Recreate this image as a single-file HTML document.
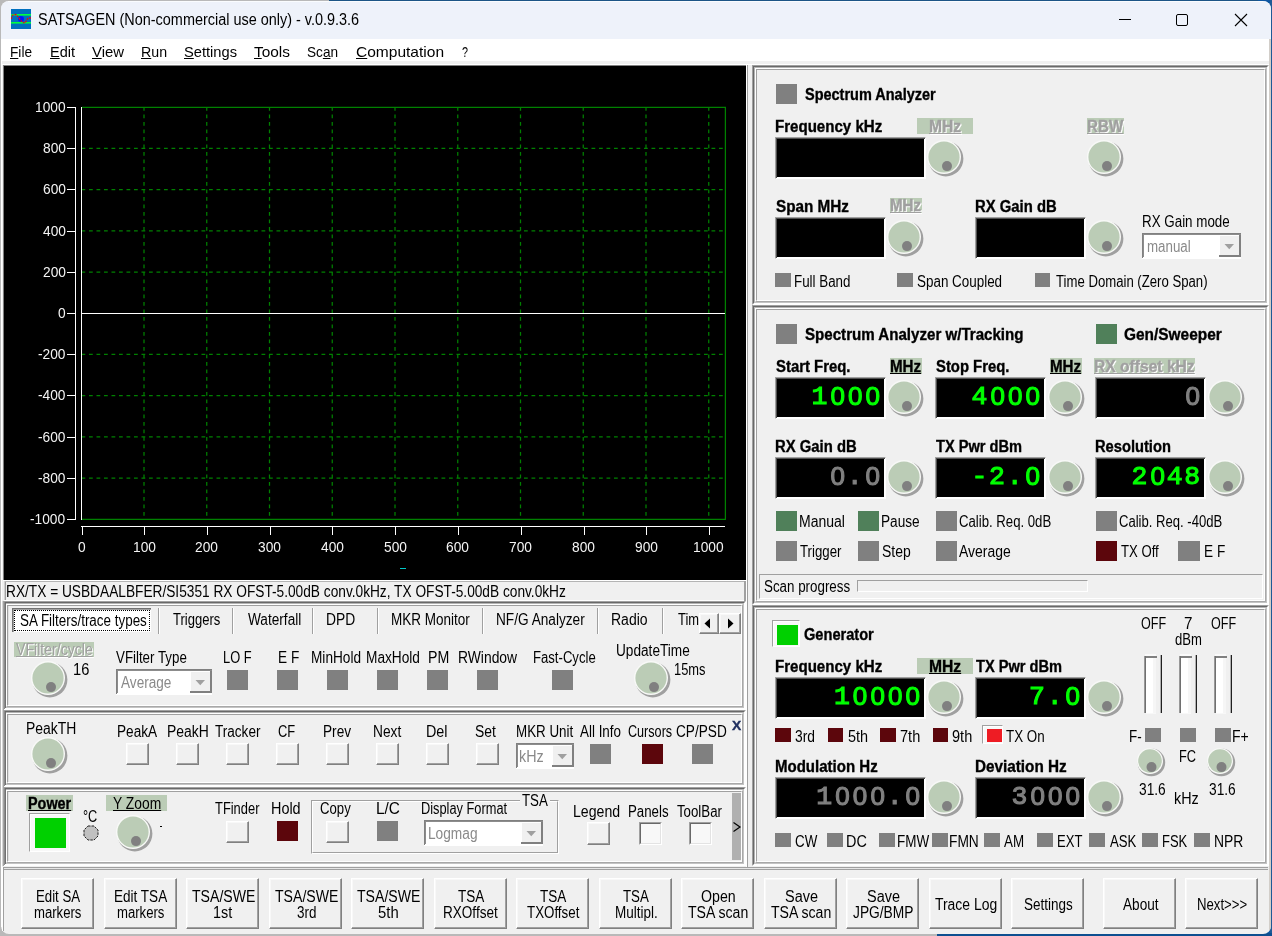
<!DOCTYPE html>
<html><head><meta charset="utf-8"><title>SATSAGEN</title><style>
html,body{margin:0;padding:0}
body{width:1272px;height:936px;overflow:hidden;position:relative;background:#b9b9b9;font-family:"Liberation Sans",sans-serif;}
div,span.t,svg{position:absolute}
#L{left:0;top:0;width:1272px;height:936px;will-change:transform}
span.t{white-space:nowrap;transform-origin:0 0;line-height:normal;display:block}
.kn i{position:absolute;left:3px;top:3px;right:-2px;bottom:-2px;border-radius:50%;background:#a0a0a0}
.kn b{position:absolute;left:0;top:0;right:0;bottom:0;border-radius:50%;background:#bbccb6;border:1px solid #f4f6f2;box-sizing:border-box}
.kn u{position:absolute;border-radius:50%;background:#808080}
.dsp{background:#000;box-sizing:border-box;border:1px solid;border-color:#a0a0a0 #fff #fff #a0a0a0;box-shadow:inset 1px 1px 0 #505050, inset -1px -1px 0 #fff;font-family:"Liberation Mono",monospace;font-weight:normal;-webkit-text-stroke:1.1px currentColor;font-size:26.5px;overflow:hidden}
.dsp span{position:absolute;right:4px;top:3px;white-space:nowrap;height:32px}
.dsp i{display:inline-block;width:17.6px;height:32px;line-height:32px;text-align:center;font-style:normal;vertical-align:top}
.dsp i.z{font-family:"Liberation Sans",sans-serif;font-size:26px;position:relative;top:-1px;left:0.6px;transform:scaleX(1.0)}
.btn{box-sizing:border-box;background:#f0f0f0;border:1px solid;border-color:#fff #808080 #808080 #fff;box-shadow:inset -1px -1px 0 #a0a0a0, inset 1px 1px 0 #f8f8f8}
.cb{box-sizing:border-box;background:#fff;border:1px solid;border-color:#a0a0a0 #fff #fff #a0a0a0;box-shadow:inset 1px 1px 0 #696969, inset -1px -1px 0 #e3e3e3}
.cbb{position:absolute;right:2px;top:2px;bottom:2px;box-sizing:border-box;background:#f0f0f0;border:1px solid;border-color:#fff #808080 #808080 #fff;box-shadow:inset -1px -1px 0 #a0a0a0}
.cbb i{position:absolute;left:50%;top:50%;margin:-2px 0 0 -4px;border:4px solid transparent;border-top:4px solid #808080;border-bottom:0}
</style></head>
<body><div id="L">
<div style="left:0px;top:0px;width:1272px;height:936px;background:#b9b9b9;"></div>
<div style="left:329px;top:0px;width:943px;height:1px;background:#1c5586;"></div>
<div style="left:1258px;top:0px;width:14px;height:12px;background:#0f58a3;"></div>
<div style="left:1258px;top:922px;width:14px;height:14px;background:#0f58a3;"></div>
<div style="left:1270px;top:0px;width:2px;height:936px;background:#1f5a96;"></div>
<div style="left:937px;top:933px;width:335px;height:3px;background:#0d4f90;"></div>
<div style="left:1px;top:1px;width:1270px;height:933px;background:#f0f0f0;border-radius:8px 8px 8px 8px;overflow:hidden;"><div style="left:0;top:0;width:1270px;height:38px;background:#eef2fa"></div><div style="left:0;top:38px;width:1270px;height:22px;background:#ffffff"></div><div style="left:1268px;top:38px;width:2px;height:895px;background:#d2cec9"></div></div>
<svg style="left:11px;top:9px" width="20" height="20" viewBox="0 0 20 20"><rect width="20" height="20" fill="#0070c0"/><rect y="5" width="20" height="1.6" fill="#00ff40"/><rect y="13" width="20" height="1.6" fill="#00ff40"/><circle cx="10" cy="10" r="3" fill="#0018ff"/><path d="M0 10 L2 6 L5 5.5 L8 9 L11 13 L14 14 L17 9 L20 9" fill="none" stroke="#e01010" stroke-width="1.3" stroke-dasharray="2 1"/></svg>
<span class="t " style="left:37.78px;top:10.8px;font-size:16px;transform:scaleX(0.902);color:#000;">SATSAGEN (Non-commercial use only) - v.0.9.3.6</span>
<svg style="left:1110px;top:1px" width="160" height="38" viewBox="0 0 160 38"><path d="M9 18.500 H21" stroke="#000" stroke-width="1" fill="none"/><rect x="66.500" y="13.500" width="11" height="11" rx="1.5" fill="none" stroke="#000" stroke-width="1"/><path d="M125 13 L137 25 M137 13 L125 25" stroke="#000" stroke-width="1.1" fill="none"/></svg>
<span class="t" style="left:10px;top:43px;font-size:15px;transform:scaleX(0.910)"><u>F</u>ile</span>
<span class="t" style="left:50px;top:43px;font-size:15px;transform:scaleX(0.967)"><u>E</u>dit</span>
<span class="t" style="left:92px;top:43px;font-size:15px;transform:scaleX(0.993)"><u>V</u>iew</span>
<span class="t" style="left:141px;top:43px;font-size:15px;transform:scaleX(0.945)"><u>R</u>un</span>
<span class="t" style="left:184px;top:43px;font-size:15px;transform:scaleX(0.978)"><u>S</u>ettings</span>
<span class="t" style="left:254px;top:43px;font-size:15px;transform:scaleX(1.028)"><u>T</u>ools</span>
<span class="t" style="left:307px;top:43px;font-size:15px;transform:scaleX(0.907)">Sc<u>a</u>n</span>
<span class="t" style="left:356px;top:43px;font-size:15px;transform:scaleX(1.035)"><u>C</u>omputation</span>
<span class="t" style="left:462px;top:43px;font-size:15px;transform:scaleX(0.719)">?</span>
<div style="left:1px;top:64px;width:1268px;height:1px;background:#ffffff;"></div>
<div style="left:1px;top:39px;width:1px;height:888px;background:#ffffff;"></div>
<div style="left:8px;top:1px;width:1255px;height:1px;background:#fafcfe;"></div>
<div style="left:3px;top:65px;width:743px;height:1px;background:#808080;"></div>
<div style="left:3px;top:65px;width:1px;height:515px;background:#808080;"></div>
<div style="left:4px;top:66px;width:742px;height:514px;background:#000000;"></div>
<div style="left:3px;top:580px;width:743px;height:1px;background:#ffffff;"></div>
<div style="left:746px;top:65px;width:1px;height:802px;background:#ffffff;"></div>
<div style="left:747px;top:65px;width:1px;height:802px;background:#a0a0a0;"></div>
<svg style="left:4px;top:66px" width="742" height="514" viewBox="0 0 742 514" shape-rendering="crispEdges"><path d="M140.0 41 V453" stroke="#008000" stroke-width="1.25" stroke-dasharray="3.75 3.75" shape-rendering="auto"/><path d="M202.75 41 V453" stroke="#008000" stroke-width="1.25" stroke-dasharray="3.75 3.75" shape-rendering="auto"/><path d="M265.5 41 V453" stroke="#008000" stroke-width="1.25" stroke-dasharray="3.75 3.75" shape-rendering="auto"/><path d="M328.25 41 V453" stroke="#008000" stroke-width="1.25" stroke-dasharray="3.75 3.75" shape-rendering="auto"/><path d="M391.0 41 V453" stroke="#008000" stroke-width="1.25" stroke-dasharray="3.75 3.75" shape-rendering="auto"/><path d="M453.75 41 V453" stroke="#008000" stroke-width="1.25" stroke-dasharray="3.75 3.75" shape-rendering="auto"/><path d="M516.5 41 V453" stroke="#008000" stroke-width="1.25" stroke-dasharray="3.75 3.75" shape-rendering="auto"/><path d="M579.25 41 V453" stroke="#008000" stroke-width="1.25" stroke-dasharray="3.75 3.75" shape-rendering="auto"/><path d="M642.0 41 V453" stroke="#008000" stroke-width="1.25" stroke-dasharray="3.75 3.75" shape-rendering="auto"/><path d="M704.75 41 V453" stroke="#008000" stroke-width="1.25" stroke-dasharray="3.75 3.75" shape-rendering="auto"/><path d="M77.5 82.4 H721" stroke="#008000" stroke-width="1.25" stroke-dasharray="3.75 3.75" shape-rendering="auto"/><path d="M77.5 123.6 H721" stroke="#008000" stroke-width="1.25" stroke-dasharray="3.75 3.75" shape-rendering="auto"/><path d="M77.5 164.8 H721" stroke="#008000" stroke-width="1.25" stroke-dasharray="3.75 3.75" shape-rendering="auto"/><path d="M77.5 206.0 H721" stroke="#008000" stroke-width="1.25" stroke-dasharray="3.75 3.75" shape-rendering="auto"/><path d="M77.5 288.4 H721" stroke="#008000" stroke-width="1.25" stroke-dasharray="3.75 3.75" shape-rendering="auto"/><path d="M77.5 329.6 H721" stroke="#008000" stroke-width="1.25" stroke-dasharray="3.75 3.75" shape-rendering="auto"/><path d="M77.5 370.8 H721" stroke="#008000" stroke-width="1.25" stroke-dasharray="3.75 3.75" shape-rendering="auto"/><path d="M77.5 412.0 H721" stroke="#008000" stroke-width="1.25" stroke-dasharray="3.75 3.75" shape-rendering="auto"/><path d="M78 41.400000000000006 H721.4 V453.4 H78" stroke="#008000" stroke-width="1.25" fill="none" shape-rendering="auto"/><path d="M77.5 41 V454" stroke="#fff" stroke-width="1"/><path d="M77 247.5 H721" stroke="#fff" stroke-width="1"/><path d="M71.5 41 V454" stroke="#fff" stroke-width="1"/><path d="M63 41.5 H72" stroke="#fff" stroke-width="1"/><path d="M63 82.5 H72" stroke="#fff" stroke-width="1"/><path d="M63 123.5 H72" stroke="#fff" stroke-width="1"/><path d="M63 165.5 H72" stroke="#fff" stroke-width="1"/><path d="M63 206.5 H72" stroke="#fff" stroke-width="1"/><path d="M63 247.5 H72" stroke="#fff" stroke-width="1"/><path d="M63 288.5 H72" stroke="#fff" stroke-width="1"/><path d="M63 329.5 H72" stroke="#fff" stroke-width="1"/><path d="M63 371.5 H72" stroke="#fff" stroke-width="1"/><path d="M63 412.5 H72" stroke="#fff" stroke-width="1"/><path d="M63 453.5 H72" stroke="#fff" stroke-width="1"/><path d="M77 460.5 H721" stroke="#fff" stroke-width="1"/><path d="M78.5 461 V469" stroke="#fff" stroke-width="1"/><path d="M140.5 461 V469" stroke="#fff" stroke-width="1"/><path d="M203.5 461 V469" stroke="#fff" stroke-width="1"/><path d="M266.5 461 V469" stroke="#fff" stroke-width="1"/><path d="M328.5 461 V469" stroke="#fff" stroke-width="1"/><path d="M391.5 461 V469" stroke="#fff" stroke-width="1"/><path d="M454.5 461 V469" stroke="#fff" stroke-width="1"/><path d="M517.5 461 V469" stroke="#fff" stroke-width="1"/><path d="M580.5 461 V469" stroke="#fff" stroke-width="1"/><path d="M642.5 461 V469" stroke="#fff" stroke-width="1"/><path d="M705.5 461 V469" stroke="#fff" stroke-width="1"/><path d="M396 502.5 H402" stroke="#00c8c8" stroke-width="1"/></svg>
<span class="t " style="left:34.9px;top:98.1px;font-size:15px;transform:scaleX(0.916);color:#f4f4f4;">1000</span>
<span class="t " style="left:42.6px;top:139.1px;font-size:15px;transform:scaleX(0.916);color:#f4f4f4;">800</span>
<span class="t " style="left:42.59px;top:180.1px;font-size:15px;transform:scaleX(0.916);color:#f4f4f4;">600</span>
<span class="t " style="left:42.6px;top:222.1px;font-size:15px;transform:scaleX(0.916);color:#f4f4f4;">400</span>
<span class="t " style="left:42.59px;top:263.1px;font-size:15px;transform:scaleX(0.916);color:#f4f4f4;">200</span>
<span class="t " style="left:57.85px;top:304.1px;font-size:15px;transform:scaleX(0.916);color:#f4f4f4;">0</span>
<span class="t " style="left:37.92px;top:345.1px;font-size:15px;transform:scaleX(0.916);color:#f4f4f4;">-200</span>
<span class="t " style="left:37.92px;top:386.1px;font-size:15px;transform:scaleX(0.916);color:#f4f4f4;">-400</span>
<span class="t " style="left:37.92px;top:428.1px;font-size:15px;transform:scaleX(0.916);color:#f4f4f4;">-600</span>
<span class="t " style="left:37.92px;top:469.1px;font-size:15px;transform:scaleX(0.916);color:#f4f4f4;">-800</span>
<span class="t " style="left:30.36px;top:510.1px;font-size:15px;transform:scaleX(0.916);color:#f4f4f4;">-1000</span>
<span class="t " style="left:77.65px;top:538.1px;font-size:15px;transform:scaleX(0.916);color:#f4f4f4;">0</span>
<span class="t " style="left:132.5px;top:538.1px;font-size:15px;transform:scaleX(0.916);color:#f4f4f4;">100</span>
<span class="t " style="left:195.45px;top:538.1px;font-size:15px;transform:scaleX(0.916);color:#f4f4f4;">200</span>
<span class="t " style="left:258.27px;top:538.1px;font-size:15px;transform:scaleX(0.916);color:#f4f4f4;">300</span>
<span class="t " style="left:321.17px;top:538.1px;font-size:15px;transform:scaleX(0.916);color:#f4f4f4;">400</span>
<span class="t " style="left:383.77px;top:538.1px;font-size:15px;transform:scaleX(0.916);color:#f4f4f4;">500</span>
<span class="t " style="left:446.45px;top:538.1px;font-size:15px;transform:scaleX(0.916);color:#f4f4f4;">600</span>
<span class="t " style="left:509.2px;top:538.1px;font-size:15px;transform:scaleX(0.916);color:#f4f4f4;">700</span>
<span class="t " style="left:572.02px;top:538.1px;font-size:15px;transform:scaleX(0.916);color:#f4f4f4;">800</span>
<span class="t " style="left:634.7px;top:538.1px;font-size:15px;transform:scaleX(0.916);color:#f4f4f4;">900</span>
<span class="t " style="left:693.4px;top:538.1px;font-size:15px;transform:scaleX(0.916);color:#f4f4f4;">1000</span>
<div style="left:4px;top:581px;width:740px;height:1px;background:#b4b4b4;"></div>
<div style="left:4px;top:581px;width:1px;height:20px;background:#d0d0d0;"></div>
<div style="left:5px;top:582px;width:1px;height:18px;background:#a0a0a0;"></div>
<div style="left:744px;top:581px;width:2px;height:22px;background:#a0a0a0;"></div>
<span class="t " style="left:5.7px;top:582.5px;font-size:16px;transform:scaleX(0.856);color:#000;">RX/TX = USBDAALBFER/SI5351 RX OFST-5.00dB conv.0kHz, TX OFST-5.00dB conv.0kHz</span>
<div style="left:4px;top:600px;width:740px;height:1px;background:#ffffff;"></div>
<div style="left:752px;top:65px;width:517px;height:240px;box-sizing:border-box;border:1px solid;border-color:#a0a0a0 #ffffff #ffffff #a0a0a0;"></div>
<div style="left:753px;top:66px;width:515px;height:238px;box-sizing:border-box;border:1px solid;border-color:#696969 #ffffff #ffffff #696969;"></div>
<div style="left:754px;top:67px;width:513px;height:236px;box-sizing:border-box;border:1px solid;border-color:#b4b4b4 #c4c4c4 #c4c4c4 #b4b4b4;"></div>
<div style="left:755px;top:68px;width:511px;height:234px;box-sizing:border-box;border:1px solid;border-color:#ffffff #a8a8a8 #a8a8a8 #ffffff;"></div>
<div style="left:756px;top:69px;width:509px;height:232px;box-sizing:border-box;border:1px solid;border-color:#a0a0a0 #ffffff #ffffff #a0a0a0;"></div>
<div style="left:776px;top:84px;width:21px;height:20px;background:#808080;"></div>
<span class="t " style="left:804.57px;top:85.5px;font-size:16px;transform:scaleX(0.905);color:#000;font-weight:bold;-webkit-text-stroke:0.35px #000;">Spectrum Analyzer</span>
<span class="t " style="left:774.94px;top:117.5px;font-size:16px;transform:scaleX(0.942);color:#000;font-weight:bold;-webkit-text-stroke:0.35px #000;">Frequency kHz</span>
<div style="left:917px;top:118px;width:56px;height:16px;background:#bbccb6;"></div>
<span class="t " style="left:929.66px;top:118.5px;font-size:16px;transform:scaleX(0.978);color:#ffffff;font-weight:bold;-webkit-text-stroke:0.35px #ffffff;text-decoration:underline;">MHz</span>
<span class="t " style="left:928.66px;top:117.5px;font-size:16px;transform:scaleX(0.978);color:#a0a0a0;font-weight:bold;-webkit-text-stroke:0.35px #a0a0a0;text-decoration:underline;">MHz</span>
<div class="dsp" style="left:775px;top:137px;width:151px;height:42px;color:#00ff00"><span></span></div>
<svg style="left:922.1999999999999px;top:135.1px" width="44" height="44" viewBox="0 0 44 44"><circle cx="23.8" cy="23.8" r="17.6" fill="#a0a0a0"/><circle cx="22.0" cy="22.0" r="17.0" fill="#f8f9f7"/><circle cx="22.0" cy="22.0" r="15.6" fill="#bbccb6"/><circle cx="25.0" cy="31.1" r="5.0" fill="#808080"/></svg>
<div style="left:1087px;top:118px;width:37px;height:16px;background:#bbccb6;"></div>
<span class="t " style="left:1087.94px;top:118.5px;font-size:16px;transform:scaleX(0.947);color:#ffffff;font-weight:bold;-webkit-text-stroke:0.35px #ffffff;text-decoration:underline;">RBW</span>
<span class="t " style="left:1086.94px;top:117.5px;font-size:16px;transform:scaleX(0.947);color:#a0a0a0;font-weight:bold;-webkit-text-stroke:0.35px #a0a0a0;text-decoration:underline;">RBW</span>
<svg style="left:1082.2px;top:135.1px" width="44" height="44" viewBox="0 0 44 44"><circle cx="23.8" cy="23.8" r="17.6" fill="#a0a0a0"/><circle cx="22.0" cy="22.0" r="17.0" fill="#f8f9f7"/><circle cx="22.0" cy="22.0" r="15.6" fill="#bbccb6"/><circle cx="25.0" cy="31.1" r="5.0" fill="#808080"/></svg>
<span class="t " style="left:775.54px;top:197.5px;font-size:16px;transform:scaleX(0.955);color:#000;font-weight:bold;-webkit-text-stroke:0.35px #000;">Span MHz</span>
<div style="left:890px;top:198px;width:32px;height:15px;background:#bbccb6;"></div>
<span class="t " style="left:891.19px;top:197.5px;font-size:16px;transform:scaleX(0.946);color:#ffffff;font-weight:bold;-webkit-text-stroke:0.35px #ffffff;text-decoration:underline;">MHz</span>
<span class="t " style="left:890.19px;top:196.5px;font-size:16px;transform:scaleX(0.946);color:#a0a0a0;font-weight:bold;-webkit-text-stroke:0.35px #a0a0a0;text-decoration:underline;">MHz</span>
<div class="dsp" style="left:775px;top:217px;width:111px;height:42px;color:#00ff00"><span></span></div>
<svg style="left:882.3px;top:215.1px" width="44" height="44" viewBox="0 0 44 44"><circle cx="23.8" cy="23.8" r="17.6" fill="#a0a0a0"/><circle cx="22.0" cy="22.0" r="17.0" fill="#f8f9f7"/><circle cx="22.0" cy="22.0" r="15.6" fill="#bbccb6"/><circle cx="25.0" cy="31.1" r="5.0" fill="#808080"/></svg>
<span class="t " style="left:974.96px;top:197.5px;font-size:16px;transform:scaleX(0.928);color:#000;font-weight:bold;-webkit-text-stroke:0.35px #000;">RX Gain dB</span>
<div class="dsp" style="left:975px;top:217px;width:111px;height:42px;color:#00ff00"><span></span></div>
<svg style="left:1082.2px;top:215.1px" width="44" height="44" viewBox="0 0 44 44"><circle cx="23.8" cy="23.8" r="17.6" fill="#a0a0a0"/><circle cx="22.0" cy="22.0" r="17.0" fill="#f8f9f7"/><circle cx="22.0" cy="22.0" r="15.6" fill="#bbccb6"/><circle cx="25.0" cy="31.1" r="5.0" fill="#808080"/></svg>
<span class="t " style="left:1141.93px;top:212.5px;font-size:16px;transform:scaleX(0.836);color:#000;">RX Gain mode</span>
<div style="left:1142px;top:233px;width:99px;height:26px;background:#ffffff;"></div>
<div style="left:1142px;top:233px;width:99px;height:1px;background:#808080;"></div>
<div style="left:1143px;top:234px;width:98px;height:1px;background:#8c8c8c;"></div>
<div style="left:1142px;top:233px;width:1px;height:25px;background:#808080;"></div>
<div style="left:1143px;top:234px;width:1px;height:23px;background:#8c8c8c;"></div>
<div style="left:1219px;top:235px;width:22px;height:22px;background:#f0f0f0;"></div>
<div style="left:1219px;top:235px;width:21px;height:1px;background:#ffffff;"></div>
<div style="left:1219px;top:235px;width:1px;height:21px;background:#ffffff;"></div>
<div style="left:1239px;top:235px;width:2px;height:22px;background:#808080;"></div>
<div style="left:1219px;top:255px;width:22px;height:2px;background:#808080;"></div>
<svg style="left:1224px;top:244px" width="11" height="6" viewBox="0 0 11 6"><path d="M0.500 0 H10 L5.250 5.200 Z" fill="#a0a0a0"/></svg>
<span class="t " style="left:1146.87px;top:237.5px;font-size:16px;transform:scaleX(0.833);color:#8a8a8a;">manual</span>
<div style="left:774.9px;top:272.6px;width:15.8px;height:14.4px;background:#808080;"></div>
<span class="t " style="left:793.93px;top:272.5px;font-size:16px;transform:scaleX(0.835);color:#000;">Full Band</span>
<div style="left:897.2px;top:272.6px;width:15.8px;height:14.4px;background:#808080;"></div>
<span class="t " style="left:916.83px;top:272.5px;font-size:16px;transform:scaleX(0.839);color:#000;">Span Coupled</span>
<div style="left:1034.5px;top:272.6px;width:15.8px;height:14.4px;background:#808080;"></div>
<span class="t " style="left:1055.74px;top:272.5px;font-size:16px;transform:scaleX(0.822);color:#000;">Time Domain (Zero Span)</span>
<div style="left:752px;top:305px;width:517px;height:300px;box-sizing:border-box;border:1px solid;border-color:#a0a0a0 #ffffff #ffffff #a0a0a0;"></div>
<div style="left:753px;top:306px;width:515px;height:298px;box-sizing:border-box;border:1px solid;border-color:#696969 #ffffff #ffffff #696969;"></div>
<div style="left:754px;top:307px;width:513px;height:296px;box-sizing:border-box;border:1px solid;border-color:#b4b4b4 #c4c4c4 #c4c4c4 #b4b4b4;"></div>
<div style="left:755px;top:308px;width:511px;height:294px;box-sizing:border-box;border:1px solid;border-color:#ffffff #a8a8a8 #a8a8a8 #ffffff;"></div>
<div style="left:756px;top:309px;width:509px;height:292px;box-sizing:border-box;border:1px solid;border-color:#a0a0a0 #ffffff #ffffff #a0a0a0;"></div>
<div style="left:776px;top:324px;width:21px;height:20px;background:#808080;"></div>
<span class="t " style="left:804.55px;top:325.5px;font-size:16px;transform:scaleX(0.944);color:#000;font-weight:bold;-webkit-text-stroke:0.35px #000;">Spectrum Analyzer w/Tracking</span>
<div style="left:1096px;top:324px;width:21px;height:20px;background:#50805a;"></div>
<span class="t " style="left:1124.38px;top:325.5px;font-size:16px;transform:scaleX(0.964);color:#000;font-weight:bold;-webkit-text-stroke:0.35px #000;">Gen/Sweeper</span>
<span class="t " style="left:775.55px;top:357.5px;font-size:16px;transform:scaleX(0.931);color:#000;font-weight:bold;-webkit-text-stroke:0.35px #000;">Start Freq.</span>
<div style="left:890px;top:358px;width:32px;height:16px;background:#bbccb6;"></div>
<span class="t " style="left:890.19px;top:357.5px;font-size:16px;transform:scaleX(0.946);color:#000;font-weight:bold;-webkit-text-stroke:0.35px #000;text-decoration:underline;">MHz</span>
<div class="dsp" style="left:775px;top:377px;width:111px;height:42px;color:#00ff00"><span><i>1</i><i class="z">0</i><i class="z">0</i><i class="z">0</i></span></div>
<svg style="left:882.3px;top:375.09999999999997px" width="44" height="44" viewBox="0 0 44 44"><circle cx="23.8" cy="23.8" r="17.6" fill="#a0a0a0"/><circle cx="22.0" cy="22.0" r="17.0" fill="#f8f9f7"/><circle cx="22.0" cy="22.0" r="15.6" fill="#bbccb6"/><circle cx="25.0" cy="31.1" r="5.0" fill="#808080"/></svg>
<span class="t " style="left:935.55px;top:357.5px;font-size:16px;transform:scaleX(0.928);color:#000;font-weight:bold;-webkit-text-stroke:0.35px #000;">Stop Freq.</span>
<div style="left:1050px;top:358px;width:32px;height:16px;background:#bbccb6;"></div>
<span class="t " style="left:1050.19px;top:357.5px;font-size:16px;transform:scaleX(0.946);color:#000;font-weight:bold;-webkit-text-stroke:0.35px #000;text-decoration:underline;">MHz</span>
<div class="dsp" style="left:935px;top:377px;width:111px;height:42px;color:#00ff00"><span><i>4</i><i class="z">0</i><i class="z">0</i><i class="z">0</i></span></div>
<svg style="left:1042.5px;top:375.09999999999997px" width="44" height="44" viewBox="0 0 44 44"><circle cx="23.8" cy="23.8" r="17.6" fill="#a0a0a0"/><circle cx="22.0" cy="22.0" r="17.0" fill="#f8f9f7"/><circle cx="22.0" cy="22.0" r="15.6" fill="#bbccb6"/><circle cx="25.0" cy="31.1" r="5.0" fill="#808080"/></svg>
<div style="left:1094px;top:358px;width:101px;height:16px;background:#bbccb6;"></div>
<span class="t " style="left:1094.91px;top:358.5px;font-size:16px;transform:scaleX(0.976);color:#ffffff;font-weight:bold;-webkit-text-stroke:0.35px #ffffff;text-decoration:underline;">RX offset kHz</span>
<span class="t " style="left:1093.91px;top:357.5px;font-size:16px;transform:scaleX(0.976);color:#a0a0a0;font-weight:bold;-webkit-text-stroke:0.35px #a0a0a0;text-decoration:underline;">RX offset kHz</span>
<div class="dsp" style="left:1095px;top:377px;width:111px;height:42px;color:#808080"><span><i class="z">0</i></span></div>
<svg style="left:1202.5px;top:375.09999999999997px" width="44" height="44" viewBox="0 0 44 44"><circle cx="23.8" cy="23.8" r="17.6" fill="#a0a0a0"/><circle cx="22.0" cy="22.0" r="17.0" fill="#f8f9f7"/><circle cx="22.0" cy="22.0" r="15.6" fill="#bbccb6"/><circle cx="25.0" cy="31.1" r="5.0" fill="#808080"/></svg>
<span class="t " style="left:774.96px;top:437.5px;font-size:16px;transform:scaleX(0.928);color:#000;font-weight:bold;-webkit-text-stroke:0.35px #000;">RX Gain dB</span>
<div class="dsp" style="left:775px;top:457px;width:111px;height:42px;color:#808080"><span><i class="z">0</i><i>.</i><i class="z">0</i></span></div>
<svg style="left:882.3px;top:455.09999999999997px" width="44" height="44" viewBox="0 0 44 44"><circle cx="23.8" cy="23.8" r="17.6" fill="#a0a0a0"/><circle cx="22.0" cy="22.0" r="17.0" fill="#f8f9f7"/><circle cx="22.0" cy="22.0" r="15.6" fill="#bbccb6"/><circle cx="25.0" cy="31.1" r="5.0" fill="#808080"/></svg>
<span class="t " style="left:935.85px;top:437.5px;font-size:16px;transform:scaleX(0.913);color:#000;font-weight:bold;-webkit-text-stroke:0.35px #000;">TX Pwr dBm</span>
<div class="dsp" style="left:935px;top:457px;width:111px;height:42px;color:#00ff00"><span><i>-</i><i>2</i><i>.</i><i class="z">0</i></span></div>
<svg style="left:1042.5px;top:455.09999999999997px" width="44" height="44" viewBox="0 0 44 44"><circle cx="23.8" cy="23.8" r="17.6" fill="#a0a0a0"/><circle cx="22.0" cy="22.0" r="17.0" fill="#f8f9f7"/><circle cx="22.0" cy="22.0" r="15.6" fill="#bbccb6"/><circle cx="25.0" cy="31.1" r="5.0" fill="#808080"/></svg>
<span class="t " style="left:1094.97px;top:437.5px;font-size:16px;transform:scaleX(0.918);color:#000;font-weight:bold;-webkit-text-stroke:0.35px #000;">Resolution</span>
<div class="dsp" style="left:1095px;top:457px;width:111px;height:42px;color:#00ff00"><span><i>2</i><i class="z">0</i><i>4</i><i>8</i></span></div>
<svg style="left:1202.5px;top:455.09999999999997px" width="44" height="44" viewBox="0 0 44 44"><circle cx="23.8" cy="23.8" r="17.6" fill="#a0a0a0"/><circle cx="22.0" cy="22.0" r="17.0" fill="#f8f9f7"/><circle cx="22.0" cy="22.0" r="15.6" fill="#bbccb6"/><circle cx="25.0" cy="31.1" r="5.0" fill="#808080"/></svg>
<div style="left:776px;top:511px;width:21px;height:20px;background:#50805a;"></div>
<span class="t " style="left:798.88px;top:512.5px;font-size:16px;transform:scaleX(0.876);color:#000;">Manual</span>
<div style="left:858px;top:511px;width:21px;height:20px;background:#50805a;"></div>
<span class="t " style="left:881.41px;top:512.5px;font-size:16px;transform:scaleX(0.853);color:#000;">Pause</span>
<div style="left:936px;top:511px;width:21px;height:20px;background:#808080;"></div>
<span class="t " style="left:959.34px;top:512.5px;font-size:16px;transform:scaleX(0.823);color:#000;">Calib. Req. 0dB</span>
<div style="left:1096px;top:511px;width:21px;height:20px;background:#808080;"></div>
<span class="t " style="left:1119.35px;top:512.5px;font-size:16px;transform:scaleX(0.817);color:#000;">Calib. Req. -40dB</span>
<div style="left:776px;top:541px;width:21px;height:20px;background:#808080;"></div>
<span class="t " style="left:799.74px;top:542.5px;font-size:16px;transform:scaleX(0.827);color:#000;">Trigger</span>
<div style="left:858px;top:541px;width:21px;height:20px;background:#808080;"></div>
<span class="t " style="left:881.8px;top:542.5px;font-size:16px;transform:scaleX(0.872);color:#000;">Step</span>
<div style="left:936px;top:541px;width:21px;height:20px;background:#808080;"></div>
<span class="t " style="left:959.0px;top:542.5px;font-size:16px;transform:scaleX(0.871);color:#000;">Average</span>
<div style="left:1096px;top:541px;width:21px;height:20px;background:#5c060c;"></div>
<span class="t " style="left:1120.74px;top:542.5px;font-size:16px;transform:scaleX(0.822);color:#000;">TX Off</span>
<div style="left:1178px;top:541px;width:22px;height:20px;background:#808080;"></div>
<span class="t " style="left:1203.91px;top:542.5px;font-size:16px;transform:scaleX(0.852);color:#000;">E F</span>
<div style="left:759px;top:574px;width:504px;height:25px;box-sizing:border-box;border:1px solid;border-color:#a0a0a0 #ffffff #ffffff #a0a0a0;"></div>
<span class="t " style="left:764.33px;top:577.5px;font-size:16px;transform:scaleX(0.835);color:#000;">Scan progress</span>
<div style="left:857px;top:580px;width:231px;height:12px;box-sizing:border-box;border:1px solid;border-color:#a0a0a0 #ffffff #ffffff #a0a0a0;"></div>
<div style="left:752px;top:605px;width:517px;height:261px;box-sizing:border-box;border:1px solid;border-color:#a0a0a0 #ffffff #ffffff #a0a0a0;"></div>
<div style="left:753px;top:606px;width:515px;height:259px;box-sizing:border-box;border:1px solid;border-color:#696969 #ffffff #ffffff #696969;"></div>
<div style="left:754px;top:607px;width:513px;height:257px;box-sizing:border-box;border:1px solid;border-color:#b4b4b4 #c4c4c4 #c4c4c4 #b4b4b4;"></div>
<div style="left:755px;top:608px;width:511px;height:255px;box-sizing:border-box;border:1px solid;border-color:#ffffff #a8a8a8 #a8a8a8 #ffffff;"></div>
<div style="left:756px;top:609px;width:509px;height:253px;box-sizing:border-box;border:1px solid;border-color:#a0a0a0 #ffffff #ffffff #a0a0a0;"></div>
<div style="left:772px;top:620px;width:28px;height:27px;box-sizing:border-box;border:1px solid;border-color:#a0a0a0 #ffffff #ffffff #a0a0a0;"></div>
<div style="left:773px;top:621px;width:26px;height:25px;box-sizing:border-box;border:1px solid;border-color:#ffffff #f8f8f8 #f8f8f8 #ffffff;background:#f8f8f8;"></div>
<div style="left:777px;top:625px;width:21px;height:20px;background:#00d000;"></div>
<span class="t " style="left:804.42px;top:625.5px;font-size:16px;transform:scaleX(0.912);color:#000;font-weight:bold;-webkit-text-stroke:0.35px #000;">Generator</span>
<span class="t " style="left:774.94px;top:657.5px;font-size:16px;transform:scaleX(0.942);color:#000;font-weight:bold;-webkit-text-stroke:0.35px #000;">Frequency kHz</span>
<div style="left:917px;top:658px;width:56px;height:16px;background:#bbccb6;"></div>
<span class="t " style="left:928.66px;top:657.5px;font-size:16px;transform:scaleX(0.978);color:#000;font-weight:bold;-webkit-text-stroke:0.35px #000;text-decoration:underline;">MHz</span>
<div class="dsp" style="left:775px;top:677px;width:151px;height:42px;color:#00ff00"><span><i>1</i><i class="z">0</i><i class="z">0</i><i class="z">0</i><i class="z">0</i></span></div>
<svg style="left:922.1999999999999px;top:675.1px" width="44" height="44" viewBox="0 0 44 44"><circle cx="23.8" cy="23.8" r="17.6" fill="#a0a0a0"/><circle cx="22.0" cy="22.0" r="17.0" fill="#f8f9f7"/><circle cx="22.0" cy="22.0" r="15.6" fill="#bbccb6"/><circle cx="25.0" cy="31.1" r="5.0" fill="#808080"/></svg>
<span class="t " style="left:975.85px;top:657.5px;font-size:16px;transform:scaleX(0.913);color:#000;font-weight:bold;-webkit-text-stroke:0.35px #000;">TX Pwr dBm</span>
<div class="dsp" style="left:975px;top:677px;width:111px;height:42px;color:#00ff00"><span><i>7</i><i>.</i><i class="z">0</i></span></div>
<svg style="left:1082.2px;top:675.1px" width="44" height="44" viewBox="0 0 44 44"><circle cx="23.8" cy="23.8" r="17.6" fill="#a0a0a0"/><circle cx="22.0" cy="22.0" r="17.0" fill="#f8f9f7"/><circle cx="22.0" cy="22.0" r="15.6" fill="#bbccb6"/><circle cx="25.0" cy="31.1" r="5.0" fill="#808080"/></svg>
<div style="left:774.9px;top:727.6px;width:15.8px;height:14.4px;background:#5c060c;"></div>
<span class="t " style="left:794.95px;top:727.5px;font-size:16px;transform:scaleX(0.863);color:#000;">3rd</span>
<div style="left:827.6px;top:727.6px;width:15.8px;height:14.4px;background:#5c060c;"></div>
<span class="t " style="left:847.62px;top:727.5px;font-size:16px;transform:scaleX(0.903);color:#000;">5th</span>
<div style="left:880.1px;top:727.6px;width:15.8px;height:14.4px;background:#5c060c;"></div>
<span class="t " style="left:899.97px;top:727.5px;font-size:16px;transform:scaleX(0.910);color:#000;">7th</span>
<div style="left:932.6px;top:727.6px;width:15.8px;height:14.4px;background:#5c060c;"></div>
<span class="t " style="left:952.47px;top:727.5px;font-size:16px;transform:scaleX(0.910);color:#000;">9th</span>
<div style="left:982px;top:725px;width:21px;height:19px;box-sizing:border-box;border:1px solid;border-color:#a0a0a0 #ffffff #ffffff #a0a0a0;"></div>
<div style="left:983px;top:726px;width:19px;height:17px;box-sizing:border-box;border:1px solid;border-color:#ffffff #f8f8f8 #f8f8f8 #ffffff;background:#f8f8f8;"></div>
<div style="left:987px;top:729px;width:15px;height:13px;background:#ee1c24;"></div>
<span class="t " style="left:1005.73px;top:727.5px;font-size:16px;transform:scaleX(0.837);color:#000;">TX On</span>
<span class="t " style="left:774.95px;top:757.5px;font-size:16px;transform:scaleX(0.939);color:#000;font-weight:bold;-webkit-text-stroke:0.35px #000;">Modulation Hz</span>
<div class="dsp" style="left:775px;top:777px;width:151px;height:42px;color:#808080"><span><i>1</i><i class="z">0</i><i class="z">0</i><i class="z">0</i><i>.</i><i class="z">0</i></span></div>
<svg style="left:922.1999999999999px;top:775.1px" width="44" height="44" viewBox="0 0 44 44"><circle cx="23.8" cy="23.8" r="17.6" fill="#a0a0a0"/><circle cx="22.0" cy="22.0" r="17.0" fill="#f8f9f7"/><circle cx="22.0" cy="22.0" r="15.6" fill="#bbccb6"/><circle cx="25.0" cy="31.1" r="5.0" fill="#808080"/></svg>
<span class="t " style="left:974.93px;top:757.5px;font-size:16px;transform:scaleX(0.955);color:#000;font-weight:bold;-webkit-text-stroke:0.35px #000;">Deviation Hz</span>
<div class="dsp" style="left:975px;top:777px;width:111px;height:42px;color:#808080"><span><i>3</i><i class="z">0</i><i class="z">0</i><i class="z">0</i></span></div>
<svg style="left:1082.2px;top:775.1px" width="44" height="44" viewBox="0 0 44 44"><circle cx="23.8" cy="23.8" r="17.6" fill="#a0a0a0"/><circle cx="22.0" cy="22.0" r="17.0" fill="#f8f9f7"/><circle cx="22.0" cy="22.0" r="15.6" fill="#bbccb6"/><circle cx="25.0" cy="31.1" r="5.0" fill="#808080"/></svg>
<div style="left:775.4px;top:832.8px;width:15.8px;height:14.4px;background:#808080;"></div>
<span class="t " style="left:794.83px;top:832.5px;font-size:16px;transform:scaleX(0.835);color:#000;">CW</span>
<div style="left:827.4px;top:832.8px;width:15.8px;height:14.4px;background:#808080;"></div>
<span class="t " style="left:846.35px;top:832.5px;font-size:16px;transform:scaleX(0.900);color:#000;">DC</span>
<div style="left:879.4px;top:832.8px;width:15.8px;height:14.4px;background:#808080;"></div>
<span class="t " style="left:896.92px;top:832.5px;font-size:16px;transform:scaleX(0.842);color:#000;">FMW</span>
<div style="left:932.4px;top:832.8px;width:15.8px;height:14.4px;background:#808080;"></div>
<span class="t " style="left:948.9px;top:832.5px;font-size:16px;transform:scaleX(0.859);color:#000;">FMN</span>
<div style="left:984.4px;top:832.8px;width:15.8px;height:14.4px;background:#808080;"></div>
<span class="t " style="left:1004.0px;top:832.5px;font-size:16px;transform:scaleX(0.836);color:#000;">AM</span>
<div style="left:1037.4px;top:832.8px;width:15.8px;height:14.4px;background:#808080;"></div>
<span class="t " style="left:1056.96px;top:832.5px;font-size:16px;transform:scaleX(0.815);color:#000;">EXT</span>
<div style="left:1089.4px;top:832.8px;width:15.8px;height:14.4px;background:#808080;"></div>
<span class="t " style="left:1109.5px;top:832.5px;font-size:16px;transform:scaleX(0.821);color:#000;">ASK</span>
<div style="left:1142.4px;top:832.8px;width:15.8px;height:14.4px;background:#808080;"></div>
<span class="t " style="left:1161.96px;top:832.5px;font-size:16px;transform:scaleX(0.811);color:#000;">FSK</span>
<div style="left:1194.4px;top:832.8px;width:15.8px;height:14.4px;background:#808080;"></div>
<span class="t " style="left:1213.89px;top:832.5px;font-size:16px;transform:scaleX(0.868);color:#000;">NPR</span>
<span class="t " style="left:1140.87px;top:614.5px;font-size:16px;transform:scaleX(0.785);color:#000;">OFF</span>
<span class="t " style="left:1183.74px;top:614.5px;font-size:16px;transform:scaleX(0.951);color:#000;">7</span>
<span class="t " style="left:1210.87px;top:614.5px;font-size:16px;transform:scaleX(0.785);color:#000;">OFF</span>
<span class="t " style="left:1174.98px;top:630.5px;font-size:16px;transform:scaleX(0.817);color:#000;">dBm</span>
<div style="left:1145px;top:654px;width:11px;height:2px;background:#fafafa;"></div>
<div style="left:1144px;top:656px;width:13px;height:2px;background:#808080;"></div>
<div style="left:1144px;top:656px;width:1px;height:57px;background:#989898;"></div>
<div style="left:1145px;top:656px;width:1px;height:57px;background:#707070;"></div>
<div style="left:1146px;top:658px;width:7px;height:55px;background:#ffffff;"></div>
<div style="left:1153px;top:658px;width:3px;height:55px;background:#f6f6f6;"></div>
<div style="left:1146px;top:713px;width:10px;height:1px;background:#f8f8f8;"></div>
<div style="left:1161px;top:655px;width:1px;height:58px;background:#202020;"></div>
<div style="left:1160px;top:655px;width:1px;height:58px;background:#b0b0b0;"></div>
<div style="left:1180px;top:654px;width:11px;height:2px;background:#fafafa;"></div>
<div style="left:1179px;top:656px;width:13px;height:2px;background:#808080;"></div>
<div style="left:1179px;top:656px;width:1px;height:57px;background:#989898;"></div>
<div style="left:1180px;top:656px;width:1px;height:57px;background:#707070;"></div>
<div style="left:1181px;top:658px;width:7px;height:55px;background:#ffffff;"></div>
<div style="left:1188px;top:658px;width:3px;height:55px;background:#f6f6f6;"></div>
<div style="left:1181px;top:713px;width:10px;height:1px;background:#f8f8f8;"></div>
<div style="left:1196px;top:655px;width:1px;height:58px;background:#202020;"></div>
<div style="left:1195px;top:655px;width:1px;height:58px;background:#b0b0b0;"></div>
<div style="left:1215px;top:654px;width:11px;height:2px;background:#fafafa;"></div>
<div style="left:1214px;top:656px;width:13px;height:2px;background:#808080;"></div>
<div style="left:1214px;top:656px;width:1px;height:57px;background:#989898;"></div>
<div style="left:1215px;top:656px;width:1px;height:57px;background:#707070;"></div>
<div style="left:1216px;top:658px;width:7px;height:55px;background:#ffffff;"></div>
<div style="left:1223px;top:658px;width:3px;height:55px;background:#f6f6f6;"></div>
<div style="left:1216px;top:713px;width:10px;height:1px;background:#f8f8f8;"></div>
<div style="left:1231px;top:655px;width:1px;height:58px;background:#202020;"></div>
<div style="left:1230px;top:655px;width:1px;height:58px;background:#b0b0b0;"></div>
<span class="t " style="left:1128.93px;top:727.5px;font-size:16px;transform:scaleX(0.838);color:#000;">F-</span>
<div style="left:1144.8px;top:727.6px;width:15.8px;height:14.4px;background:#808080;"></div>
<div style="left:1179.8px;top:727.6px;width:15.8px;height:14.4px;background:#808080;"></div>
<div style="left:1214.8px;top:727.6px;width:15.8px;height:14.4px;background:#808080;"></div>
<span class="t " style="left:1231.88px;top:727.5px;font-size:16px;transform:scaleX(0.876);color:#000;">F+</span>
<svg style="left:1128.4px;top:739.2px" width="44" height="44" viewBox="0 0 44 44"><circle cx="23.4" cy="23.4" r="13.8" fill="#a0a0a0"/><circle cx="22.0" cy="22.0" r="13.0" fill="#f8f9f7"/><circle cx="22.0" cy="22.0" r="11.8" fill="#bbccb6"/><circle cx="23.5" cy="28.1" r="5.0" fill="#808080"/></svg>
<svg style="left:1198.4px;top:739.2px" width="44" height="44" viewBox="0 0 44 44"><circle cx="23.4" cy="23.4" r="13.8" fill="#a0a0a0"/><circle cx="22.0" cy="22.0" r="13.0" fill="#f8f9f7"/><circle cx="22.0" cy="22.0" r="11.8" fill="#bbccb6"/><circle cx="23.5" cy="28.1" r="5.0" fill="#808080"/></svg>
<span class="t " style="left:1179.28px;top:747.5px;font-size:16px;transform:scaleX(0.801);color:#000;">FC</span>
<span class="t " style="left:1138.65px;top:780.5px;font-size:16px;transform:scaleX(0.857);color:#000;">31.6</span>
<span class="t " style="left:1208.65px;top:780.5px;font-size:16px;transform:scaleX(0.857);color:#000;">31.6</span>
<span class="t " style="left:1174.49px;top:790.0px;font-size:16px;transform:scaleX(0.898);color:#000;">kHz</span>
<div style="left:3px;top:601px;width:743px;height:109px;box-sizing:border-box;border:1px solid;border-color:#a0a0a0 #ffffff #ffffff #a0a0a0;"></div>
<div style="left:4px;top:602px;width:741px;height:107px;box-sizing:border-box;border:1px solid;border-color:#696969 #ffffff #ffffff #696969;"></div>
<div style="left:5px;top:603px;width:739px;height:105px;box-sizing:border-box;border:1px solid;border-color:#b4b4b4 #c4c4c4 #c4c4c4 #b4b4b4;"></div>
<div style="left:6px;top:604px;width:737px;height:103px;box-sizing:border-box;border:1px solid;border-color:#ffffff #a8a8a8 #a8a8a8 #ffffff;"></div>
<div style="left:7px;top:605px;width:735px;height:101px;box-sizing:border-box;border:1px solid;border-color:#a0a0a0 #ffffff #ffffff #a0a0a0;"></div>
<div style="left:2px;top:601px;width:1px;height:109px;background:#d4d4d4;"></div>
<div style="left:3px;top:601px;width:1px;height:109px;background:#a4a4a4;"></div>
<div style="left:4px;top:602px;width:1px;height:107px;background:#8c8c8c;"></div>
<div style="left:5px;top:603px;width:1px;height:105px;background:#707070;"></div>
<div style="left:8px;top:606px;width:1px;height:99px;background:#e0e0e0;"></div>
<div style="left:12px;top:608px;width:139px;height:24px;background:#ffffff;"></div>
<div style="left:12px;top:608px;width:139px;height:1px;background:#707070;"></div>
<div style="left:13px;top:609px;width:138px;height:1px;background:#a0a0a0;"></div>
<div style="left:12px;top:608px;width:1px;height:24px;background:#707070;"></div>
<div style="left:13px;top:609px;width:1px;height:23px;background:#a0a0a0;"></div>
<div style="left:14px;top:610px;width:136px;height:21px;box-sizing:border-box;border:1px dotted #000"></div>
<span class="t " style="left:20.03px;top:611.8px;font-size:16px;transform:scaleX(0.839);color:#000;">SA Filters/trace types</span>
<span class="t " style="left:173.24px;top:611.3px;font-size:16px;transform:scaleX(0.814);color:#000;">Triggers</span>
<span class="t " style="left:247.5px;top:611.3px;font-size:16px;transform:scaleX(0.852);color:#000;">Waterfall</span>
<span class="t " style="left:326.39px;top:611.3px;font-size:16px;transform:scaleX(0.864);color:#000;">DPD</span>
<span class="t " style="left:391.42px;top:611.3px;font-size:16px;transform:scaleX(0.844);color:#000;">MKR Monitor</span>
<span class="t " style="left:496.41px;top:611.3px;font-size:16px;transform:scaleX(0.853);color:#000;">NF/G Analyzer</span>
<span class="t " style="left:611.38px;top:611.3px;font-size:16px;transform:scaleX(0.875);color:#000;">Radio</span>
<span class="t " style="left:678.24px;top:611.3px;font-size:16px;transform:scaleX(0.806);color:#000;">Tim</span>
<div style="left:158px;top:608px;width:1px;height:26px;background:#a0a0a0;"></div>
<div style="left:159px;top:608px;width:1px;height:26px;background:#ffffff;"></div>
<div style="left:232px;top:608px;width:1px;height:26px;background:#a0a0a0;"></div>
<div style="left:233px;top:608px;width:1px;height:26px;background:#ffffff;"></div>
<div style="left:312px;top:608px;width:1px;height:26px;background:#a0a0a0;"></div>
<div style="left:313px;top:608px;width:1px;height:26px;background:#ffffff;"></div>
<div style="left:377px;top:608px;width:1px;height:26px;background:#a0a0a0;"></div>
<div style="left:378px;top:608px;width:1px;height:26px;background:#ffffff;"></div>
<div style="left:482px;top:608px;width:1px;height:26px;background:#a0a0a0;"></div>
<div style="left:483px;top:608px;width:1px;height:26px;background:#ffffff;"></div>
<div style="left:597px;top:608px;width:1px;height:26px;background:#a0a0a0;"></div>
<div style="left:598px;top:608px;width:1px;height:26px;background:#ffffff;"></div>
<div style="left:662px;top:608px;width:1px;height:26px;background:#a0a0a0;"></div>
<div style="left:663px;top:608px;width:1px;height:26px;background:#ffffff;"></div>
<div class="btn" style="left:699px;top:613px;width:20px;height:21px"></div>
<div class="btn" style="left:719px;top:613px;width:22px;height:21px"></div>
<svg style="left:699px;top:613px" width="42" height="21" viewBox="0 0 42 21"><path d="M11 5.500 L5.500 10.500 L11 15.500 Z" fill="#000"/><path d="M29 5.500 L34.500 10.500 L29 15.500 Z" fill="#000"/></svg>
<div style="left:14px;top:642px;width:80px;height:15px;background:#bbccb6;"></div>
<span class="t " style="left:16.86px;top:641.5px;font-size:16px;transform:scaleX(0.881);color:#ffffff;text-decoration:underline;">VFilter/cycle</span>
<span class="t " style="left:15.86px;top:640.5px;font-size:16px;transform:scaleX(0.881);color:#a0a0a0;text-decoration:underline;">VFilter/cycle</span>
<svg style="left:26.199999999999996px;top:655.9000000000001px" width="44" height="44" viewBox="0 0 44 44"><circle cx="23.8" cy="23.8" r="17.6" fill="#a0a0a0"/><circle cx="22.0" cy="22.0" r="17.0" fill="#f8f9f7"/><circle cx="22.0" cy="22.0" r="15.6" fill="#bbccb6"/><circle cx="25.0" cy="31.1" r="5.0" fill="#808080"/></svg>
<span class="t " style="left:72.83px;top:661.0px;font-size:16px;transform:scaleX(0.915);color:#000;">16</span>
<span class="t " style="left:115.87px;top:649.0px;font-size:16px;transform:scaleX(0.832);color:#000;">VFilter Type</span>
<div style="left:116px;top:669px;width:96px;height:26px;background:#ffffff;"></div>
<div style="left:116px;top:669px;width:96px;height:1px;background:#808080;"></div>
<div style="left:117px;top:670px;width:95px;height:1px;background:#8c8c8c;"></div>
<div style="left:116px;top:669px;width:1px;height:25px;background:#808080;"></div>
<div style="left:117px;top:670px;width:1px;height:23px;background:#8c8c8c;"></div>
<div style="left:190px;top:671px;width:22px;height:22px;background:#f0f0f0;"></div>
<div style="left:190px;top:671px;width:21px;height:1px;background:#ffffff;"></div>
<div style="left:190px;top:671px;width:1px;height:21px;background:#ffffff;"></div>
<div style="left:210px;top:671px;width:2px;height:22px;background:#808080;"></div>
<div style="left:190px;top:691px;width:22px;height:2px;background:#808080;"></div>
<svg style="left:195px;top:680px" width="11" height="6" viewBox="0 0 11 6"><path d="M0.500 0 H10 L5.250 5.200 Z" fill="#a0a0a0"/></svg>
<span class="t " style="left:121.2px;top:673.5px;font-size:16px;transform:scaleX(0.850);color:#8a8a8a;">Average</span>
<span class="t " style="left:222.97px;top:649.0px;font-size:16px;transform:scaleX(0.804);color:#000;">LO F</span>
<div style="left:227px;top:670px;width:21px;height:20px;background:#808080;"></div>
<span class="t " style="left:277.91px;top:649.0px;font-size:16px;transform:scaleX(0.852);color:#000;">E F</span>
<div style="left:277px;top:670px;width:21px;height:20px;background:#808080;"></div>
<span class="t " style="left:310.91px;top:649.0px;font-size:16px;transform:scaleX(0.852);color:#000;">MinHold</span>
<div style="left:327px;top:670px;width:21px;height:20px;background:#808080;"></div>
<span class="t " style="left:365.91px;top:649.0px;font-size:16px;transform:scaleX(0.855);color:#000;">MaxHold</span>
<div style="left:377px;top:670px;width:21px;height:20px;background:#808080;"></div>
<span class="t " style="left:427.87px;top:649.0px;font-size:16px;transform:scaleX(0.886);color:#000;">PM</span>
<div style="left:427px;top:670px;width:21px;height:20px;background:#808080;"></div>
<span class="t " style="left:457.89px;top:649.0px;font-size:16px;transform:scaleX(0.867);color:#000;">RWindow</span>
<div style="left:477px;top:670px;width:21px;height:20px;background:#808080;"></div>
<span class="t " style="left:532.95px;top:649.0px;font-size:16px;transform:scaleX(0.820);color:#000;">Fast-Cycle</span>
<div style="left:552px;top:670px;width:21px;height:20px;background:#808080;"></div>
<span class="t " style="left:615.91px;top:641.5px;font-size:16px;transform:scaleX(0.852);color:#000;">UpdateTime</span>
<svg style="left:628.6999999999999px;top:655.9000000000001px" width="44" height="44" viewBox="0 0 44 44"><circle cx="23.8" cy="23.8" r="17.6" fill="#a0a0a0"/><circle cx="22.0" cy="22.0" r="17.0" fill="#f8f9f7"/><circle cx="22.0" cy="22.0" r="15.6" fill="#bbccb6"/><circle cx="25.0" cy="31.1" r="5.0" fill="#808080"/></svg>
<span class="t " style="left:673.97px;top:661.0px;font-size:16px;transform:scaleX(0.805);color:#000;">15ms</span>
<div style="left:3px;top:710px;width:743px;height:77px;box-sizing:border-box;border:1px solid;border-color:#a0a0a0 #ffffff #ffffff #a0a0a0;"></div>
<div style="left:4px;top:711px;width:741px;height:75px;box-sizing:border-box;border:1px solid;border-color:#696969 #ffffff #ffffff #696969;"></div>
<div style="left:5px;top:712px;width:739px;height:73px;box-sizing:border-box;border:1px solid;border-color:#b4b4b4 #c4c4c4 #c4c4c4 #b4b4b4;"></div>
<div style="left:6px;top:713px;width:737px;height:71px;box-sizing:border-box;border:1px solid;border-color:#ffffff #a8a8a8 #a8a8a8 #ffffff;"></div>
<div style="left:7px;top:714px;width:735px;height:69px;box-sizing:border-box;border:1px solid;border-color:#a0a0a0 #ffffff #ffffff #a0a0a0;"></div>
<div style="left:2px;top:710px;width:1px;height:77px;background:#d4d4d4;"></div>
<div style="left:3px;top:710px;width:1px;height:77px;background:#a4a4a4;"></div>
<div style="left:4px;top:711px;width:1px;height:75px;background:#8c8c8c;"></div>
<div style="left:5px;top:712px;width:1px;height:73px;background:#707070;"></div>
<div style="left:8px;top:715px;width:1px;height:67px;background:#e0e0e0;"></div>
<span class="t " style="left:25.89px;top:719.5px;font-size:16px;transform:scaleX(0.870);color:#000;">PeakTH</span>
<svg style="left:26.199999999999996px;top:732.1px" width="44" height="44" viewBox="0 0 44 44"><circle cx="23.8" cy="23.8" r="17.6" fill="#a0a0a0"/><circle cx="22.0" cy="22.0" r="17.0" fill="#f8f9f7"/><circle cx="22.0" cy="22.0" r="15.6" fill="#bbccb6"/><circle cx="25.0" cy="31.1" r="5.0" fill="#808080"/></svg>
<span class="t " style="left:116.91px;top:722.5px;font-size:16px;transform:scaleX(0.852);color:#000;">PeakA</span>
<div class="btn" style="left:126px;top:743px;width:23px;height:22px"></div>
<span class="t " style="left:166.89px;top:722.5px;font-size:16px;transform:scaleX(0.869);color:#000;">PeakH</span>
<div class="btn" style="left:176px;top:743px;width:23px;height:22px"></div>
<span class="t " style="left:214.73px;top:722.5px;font-size:16px;transform:scaleX(0.847);color:#000;">Tracker</span>
<div class="btn" style="left:226px;top:743px;width:23px;height:22px"></div>
<span class="t " style="left:278.35px;top:722.5px;font-size:16px;transform:scaleX(0.806);color:#000;">CF</span>
<div class="btn" style="left:276px;top:743px;width:23px;height:22px"></div>
<span class="t " style="left:322.91px;top:722.5px;font-size:16px;transform:scaleX(0.852);color:#000;">Prev</span>
<div class="btn" style="left:326px;top:743px;width:23px;height:22px"></div>
<span class="t " style="left:372.9px;top:722.5px;font-size:16px;transform:scaleX(0.857);color:#000;">Next</span>
<div class="btn" style="left:376px;top:743px;width:23px;height:22px"></div>
<span class="t " style="left:425.85px;top:722.5px;font-size:16px;transform:scaleX(0.896);color:#000;">Del</span>
<div class="btn" style="left:426px;top:743px;width:23px;height:22px"></div>
<span class="t " style="left:475.31px;top:722.5px;font-size:16px;transform:scaleX(0.868);color:#000;">Set</span>
<div class="btn" style="left:476px;top:743px;width:23px;height:22px"></div>
<span class="t " style="left:515.93px;top:722.5px;font-size:16px;transform:scaleX(0.835);color:#000;">MKR Unit</span>
<div style="left:516px;top:743px;width:58px;height:26px;background:#ffffff;"></div>
<div style="left:516px;top:743px;width:58px;height:1px;background:#808080;"></div>
<div style="left:517px;top:744px;width:57px;height:1px;background:#8c8c8c;"></div>
<div style="left:516px;top:743px;width:1px;height:25px;background:#808080;"></div>
<div style="left:517px;top:744px;width:1px;height:23px;background:#8c8c8c;"></div>
<div style="left:552px;top:745px;width:22px;height:22px;background:#f0f0f0;"></div>
<div style="left:552px;top:745px;width:21px;height:1px;background:#ffffff;"></div>
<div style="left:552px;top:745px;width:1px;height:21px;background:#ffffff;"></div>
<div style="left:572px;top:745px;width:2px;height:22px;background:#808080;"></div>
<div style="left:552px;top:765px;width:22px;height:2px;background:#808080;"></div>
<svg style="left:557px;top:754px" width="11" height="6" viewBox="0 0 11 6"><path d="M0.500 0 H10 L5.250 5.200 Z" fill="#a0a0a0"/></svg>
<span class="t " style="left:519.4px;top:747.5px;font-size:16px;transform:scaleX(0.895);color:#8a8a8a;">kHz</span>
<span class="t " style="left:579.5px;top:722.5px;font-size:16px;transform:scaleX(0.838);color:#000;">All Info</span>
<div style="left:590px;top:744px;width:21px;height:20px;background:#808080;"></div>
<span class="t " style="left:628.37px;top:722.5px;font-size:16px;transform:scaleX(0.788);color:#000;">Cursors</span>
<div style="left:642px;top:744px;width:21px;height:20px;background:#5c060c;"></div>
<span class="t " style="left:676.32px;top:722.5px;font-size:16px;transform:scaleX(0.852);color:#000;">CP/PSD</span>
<div style="left:692px;top:744px;width:21px;height:20px;background:#808080;"></div>
<span class="t " style="left:731.86px;top:718.5px;font-size:12px;transform:scaleX(1.154);color:#203060;font-weight:bold;-webkit-text-stroke:0.35px #203060;">X</span>
<div style="left:3px;top:787px;width:743px;height:79px;box-sizing:border-box;border:1px solid;border-color:#a0a0a0 #ffffff #ffffff #a0a0a0;"></div>
<div style="left:4px;top:788px;width:741px;height:77px;box-sizing:border-box;border:1px solid;border-color:#696969 #ffffff #ffffff #696969;"></div>
<div style="left:5px;top:789px;width:739px;height:75px;box-sizing:border-box;border:1px solid;border-color:#b4b4b4 #c4c4c4 #c4c4c4 #b4b4b4;"></div>
<div style="left:6px;top:790px;width:737px;height:73px;box-sizing:border-box;border:1px solid;border-color:#ffffff #a8a8a8 #a8a8a8 #ffffff;"></div>
<div style="left:7px;top:791px;width:735px;height:71px;box-sizing:border-box;border:1px solid;border-color:#a0a0a0 #ffffff #ffffff #a0a0a0;"></div>
<div style="left:2px;top:787px;width:1px;height:79px;background:#d4d4d4;"></div>
<div style="left:3px;top:787px;width:1px;height:79px;background:#a4a4a4;"></div>
<div style="left:4px;top:788px;width:1px;height:77px;background:#8c8c8c;"></div>
<div style="left:5px;top:789px;width:1px;height:75px;background:#707070;"></div>
<div style="left:8px;top:792px;width:1px;height:69px;background:#e0e0e0;"></div>
<div style="left:26px;top:795px;width:47px;height:16px;background:#bbccb6;"></div>
<span class="t " style="left:27.99px;top:794.5px;font-size:16px;transform:scaleX(0.899);color:#000;font-weight:bold;-webkit-text-stroke:0.35px #000;text-decoration:underline;">Power</span>
<div style="left:29px;top:813px;width:41px;height:39px;box-sizing:border-box;border:1px solid;border-color:#a0a0a0 #ffffff #ffffff #a0a0a0;"></div>
<div style="left:30px;top:814px;width:39px;height:37px;box-sizing:border-box;border:1px solid;border-color:#ffffff #f8f8f8 #f8f8f8 #ffffff;background:#f8f8f8;"></div>
<div style="left:35px;top:818px;width:31px;height:30px;background:#00d000;"></div>
<span class="t " style="left:83.24px;top:807.5px;font-size:16px;transform:scaleX(0.797);color:#000;">°C</span>
<svg style="left:83px;top:825px" width="16" height="16" viewBox="0 0 16 16"><path d="M5 1 H11 L15 5 V11 L11 15 H5 L1 11 V5 Z" fill="#c0c0c0" stroke="#202020" stroke-width="1" stroke-dasharray="2.5 1"/></svg>
<div style="left:106px;top:795px;width:61px;height:16px;background:#bbccb6;"></div>
<span class="t " style="left:112.72px;top:794.5px;font-size:16px;transform:scaleX(0.864);color:#000;text-decoration:underline;">Y Zoom</span>
<svg style="left:111.20000000000002px;top:809.6px" width="44" height="44" viewBox="0 0 44 44"><circle cx="23.8" cy="23.8" r="17.6" fill="#a0a0a0"/><circle cx="22.0" cy="22.0" r="17.0" fill="#f8f9f7"/><circle cx="22.0" cy="22.0" r="15.6" fill="#bbccb6"/><circle cx="25.0" cy="31.1" r="5.0" fill="#808080"/></svg>
<div style="left:160px;top:826px;width:2px;height:1px;background:#000;"></div>
<span class="t " style="left:214.74px;top:799.5px;font-size:16px;transform:scaleX(0.806);color:#000;">TFinder</span>
<div class="btn" style="left:226px;top:821px;width:23px;height:22px"></div>
<span class="t " style="left:271.35px;top:799.5px;font-size:16px;transform:scaleX(0.900);color:#000;">Hold</span>
<div style="left:277px;top:821px;width:21px;height:20px;background:#5c060c;"></div>
<div style="left:311px;top:800px;width:248px;height:54px;box-sizing:border-box;border:1px solid;border-color:#a0a0a0 #ffffff #ffffff #a0a0a0;"></div>
<div style="left:312px;top:801px;width:246px;height:52px;box-sizing:border-box;border:1px solid;border-color:#ffffff #a0a0a0 #a0a0a0 #ffffff;"></div>
<div style="left:520px;top:798px;width:30px;height:10px;background:#f0f0f0;"></div>
<span class="t " style="left:521.73px;top:791.5px;font-size:16px;transform:scaleX(0.830);color:#000;">TSA</span>
<span class="t " style="left:320.34px;top:799.5px;font-size:16px;transform:scaleX(0.822);color:#000;">Copy</span>
<div class="btn" style="left:326px;top:821px;width:23px;height:22px"></div>
<span class="t " style="left:375.77px;top:799.5px;font-size:16px;transform:scaleX(0.962);color:#000;">L/C</span>
<div style="left:377px;top:821px;width:21px;height:20px;background:#808080;"></div>
<span class="t " style="left:420.98px;top:799.5px;font-size:16px;transform:scaleX(0.800);color:#000;">Display Format</span>
<div style="left:424px;top:820px;width:119px;height:26px;background:#ffffff;"></div>
<div style="left:424px;top:820px;width:119px;height:1px;background:#808080;"></div>
<div style="left:425px;top:821px;width:118px;height:1px;background:#8c8c8c;"></div>
<div style="left:424px;top:820px;width:1px;height:25px;background:#808080;"></div>
<div style="left:425px;top:821px;width:1px;height:23px;background:#8c8c8c;"></div>
<div style="left:521px;top:822px;width:22px;height:22px;background:#f0f0f0;"></div>
<div style="left:521px;top:822px;width:21px;height:1px;background:#ffffff;"></div>
<div style="left:521px;top:822px;width:1px;height:21px;background:#ffffff;"></div>
<div style="left:541px;top:822px;width:2px;height:22px;background:#808080;"></div>
<div style="left:521px;top:842px;width:22px;height:2px;background:#808080;"></div>
<svg style="left:526px;top:831px" width="11" height="6" viewBox="0 0 11 6"><path d="M0.500 0 H10 L5.250 5.200 Z" fill="#a0a0a0"/></svg>
<span class="t " style="left:427.7px;top:824.5px;font-size:16px;transform:scaleX(0.856);color:#8a8a8a;">Logmag</span>
<span class="t " style="left:572.87px;top:802.5px;font-size:16px;transform:scaleX(0.882);color:#000;">Legend</span>
<div class="btn" style="left:587px;top:822px;width:23px;height:23px"></div>
<span class="t " style="left:627.94px;top:802.5px;font-size:16px;transform:scaleX(0.829);color:#000;">Panels</span>
<div style="left:639px;top:822px;width:23px;height:23px;box-sizing:border-box;border:1px solid;border-color:#a0a0a0 #ffffff #ffffff #a0a0a0;"></div>
<div style="left:640px;top:823px;width:21px;height:21px;box-sizing:border-box;border:1px solid;border-color:#696969 #e3e3e3 #e3e3e3 #696969;background:#f8f8f8;"></div>
<span class="t " style="left:677.24px;top:802.5px;font-size:16px;transform:scaleX(0.828);color:#000;">ToolBar</span>
<div style="left:689px;top:822px;width:23px;height:23px;box-sizing:border-box;border:1px solid;border-color:#a0a0a0 #ffffff #ffffff #a0a0a0;"></div>
<div style="left:690px;top:823px;width:21px;height:21px;box-sizing:border-box;border:1px solid;border-color:#696969 #e3e3e3 #e3e3e3 #696969;background:#f8f8f8;"></div>
<div style="left:732px;top:793px;width:9px;height:67px;background:#b0b0b0;"></div>
<svg style="left:732px;top:821px" width="10" height="12" viewBox="0 0 10 12"><path d="M1.500 1.500 L8 6 L1.500 10.500" fill="none" stroke="#000" stroke-width="1.2"/></svg>
<div style="left:2px;top:867px;width:1266px;height:1px;background:#a0a0a0;"></div>
<div style="left:2px;top:868px;width:1266px;height:1px;background:#e6e6e6;"></div>
<div style="left:2px;top:869px;width:1266px;height:1px;background:#a0a0a0;"></div>
<div style="left:2px;top:867px;width:1px;height:64px;background:#ffffff;"></div>
<div style="left:3px;top:868px;width:1px;height:63px;background:#a0a0a0;"></div>
<div class="btn" style="left:21px;top:878px;width:73px;height:51px"></div>
<span class="t " style="left:35.64px;top:887.5px;font-size:16px;transform:scaleX(0.827);color:#000;">Edit SA</span>
<span class="t " style="left:34.28px;top:903.5px;font-size:16px;transform:scaleX(0.821);color:#000;">markers</span>
<div class="btn" style="left:104px;top:878px;width:73px;height:51px"></div>
<span class="t " style="left:114.12px;top:887.5px;font-size:16px;transform:scaleX(0.846);color:#000;">Edit TSA</span>
<span class="t " style="left:117.28px;top:903.5px;font-size:16px;transform:scaleX(0.821);color:#000;">markers</span>
<div class="btn" style="left:186px;top:878px;width:73px;height:51px"></div>
<span class="t " style="left:191.62px;top:887.5px;font-size:16px;transform:scaleX(0.880);color:#000;">TSA/SWE</span>
<span class="t " style="left:213.05px;top:903.5px;font-size:16px;transform:scaleX(0.900);color:#000;">1st</span>
<div class="btn" style="left:269px;top:878px;width:73px;height:51px"></div>
<span class="t " style="left:274.62px;top:887.5px;font-size:16px;transform:scaleX(0.880);color:#000;">TSA/SWE</span>
<span class="t " style="left:296.66px;top:903.5px;font-size:16px;transform:scaleX(0.840);color:#000;">3rd</span>
<div class="btn" style="left:351px;top:878px;width:73px;height:51px"></div>
<span class="t " style="left:356.62px;top:887.5px;font-size:16px;transform:scaleX(0.880);color:#000;">TSA/SWE</span>
<span class="t " style="left:378.11px;top:903.5px;font-size:16px;transform:scaleX(0.928);color:#000;">5th</span>
<div class="btn" style="left:434px;top:878px;width:73px;height:51px"></div>
<span class="t " style="left:457.93px;top:887.5px;font-size:16px;transform:scaleX(0.846);color:#000;">TSA</span>
<span class="t " style="left:443.32px;top:903.5px;font-size:16px;transform:scaleX(0.847);color:#000;">RXOffset</span>
<div class="btn" style="left:516px;top:878px;width:73px;height:51px"></div>
<span class="t " style="left:539.93px;top:887.5px;font-size:16px;transform:scaleX(0.846);color:#000;">TSA</span>
<span class="t " style="left:526.93px;top:903.5px;font-size:16px;transform:scaleX(0.833);color:#000;">TXOffset</span>
<div class="btn" style="left:599px;top:878px;width:73px;height:51px"></div>
<span class="t " style="left:623.23px;top:887.5px;font-size:16px;transform:scaleX(0.830);color:#000;">TSA</span>
<span class="t " style="left:614.92px;top:903.5px;font-size:16px;transform:scaleX(0.844);color:#000;">Multipl.</span>
<div class="btn" style="left:681px;top:878px;width:73px;height:51px"></div>
<span class="t " style="left:700.99px;top:887.5px;font-size:16px;transform:scaleX(0.885);color:#000;">Open</span>
<span class="t " style="left:688.42px;top:903.5px;font-size:16px;transform:scaleX(0.880);color:#000;">TSA scan</span>
<div class="btn" style="left:764px;top:878px;width:73px;height:51px"></div>
<span class="t " style="left:784.78px;top:887.5px;font-size:16px;transform:scaleX(0.903);color:#000;">Save</span>
<span class="t " style="left:771.42px;top:903.5px;font-size:16px;transform:scaleX(0.880);color:#000;">TSA scan</span>
<div class="btn" style="left:846px;top:878px;width:73px;height:51px"></div>
<span class="t " style="left:866.78px;top:887.5px;font-size:16px;transform:scaleX(0.903);color:#000;">Save</span>
<span class="t " style="left:853.22px;top:903.5px;font-size:16px;transform:scaleX(0.861);color:#000;">JPG/BMP</span>
<div class="btn" style="left:929px;top:878px;width:73px;height:51px"></div>
<span class="t " style="left:935.42px;top:895.5px;font-size:16px;transform:scaleX(0.870);color:#000;">Trace Log</span>
<div class="btn" style="left:1011px;top:878px;width:73px;height:51px"></div>
<span class="t " style="left:1023.83px;top:895.5px;font-size:16px;transform:scaleX(0.843);color:#000;">Settings</span>
<div class="btn" style="left:1103px;top:878px;width:73px;height:51px"></div>
<span class="t " style="left:1122.5px;top:895.5px;font-size:16px;transform:scaleX(0.850);color:#000;">About</span>
<div class="btn" style="left:1185px;top:878px;width:73px;height:51px"></div>
<span class="t " style="left:1196.95px;top:895.5px;font-size:16px;transform:scaleX(0.824);color:#000;">Next&gt;&gt;&gt;</span>
</div></body></html>
